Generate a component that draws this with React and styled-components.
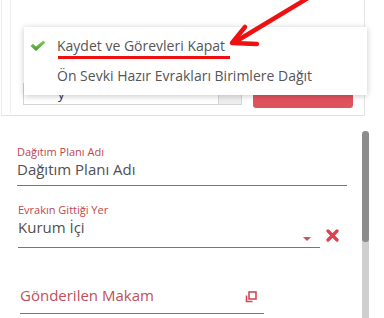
import React from "react";
import styled, { createGlobalStyle } from "styled-components";

const Global = createGlobalStyle`
  html, body { margin: 0; padding: 0; background: #fff; }
  body { font-family: "Open Sans", "Liberation Sans", sans-serif; overflow: hidden; }
  * { box-sizing: border-box; }
`;

const Page = styled.div`
  position: relative;
  width: 384px;
  height: 318px;
  overflow: hidden;
  background: #fff;
`;

const TopPanel = styled.div`
  margin-left: 1px;
  width: 364px;
  height: 116px;
  border-left: 1px solid #ececec;
  border-right: 1px solid #e6e6e6;
  border-bottom: 1px solid #e2e2e2;
`;

const TopInner = styled.div`
  margin-left: 8px;
  height: 113px;
  border-left: 1px solid #ececec;
  padding: 83px 0 0 12px;
`;

const InputGroup = styled.div`
  display: flex;
  align-items: flex-start;
`;

const TextBox = styled.div`
  width: 195px;
  height: 22px;
  border: 1px solid #d4d4d4;
  border-right: none;
  font-size: 13px;
  color: #333;
  padding: 0 0 0 34px;
  line-height: 20px;
`;

const Addon = styled.div`
  width: 24px;
  height: 22px;
  background: #eee;
  border: 1px solid #d4d4d4;
`;

const RedButton = styled.div`
  margin-left: 11px;
  width: 100px;
  height: 25px;
  background: #e0525e;
  border-radius: 3px;
`;

const Menu = styled.div`
  position: absolute;
  left: 24px;
  top: 27px;
  width: 343px;
  height: 68px;
  background: #fff;
  box-shadow: 0 1px 6px rgba(0, 0, 0, 0.22);
  padding-top: 5px;
`;

const MenuItem = styled.div`
  display: flex;
  align-items: center;
  height: ${(p) => p.$h}px;
  padding-left: 6px;
  font-size: 14px;
  color: #555;
  white-space: nowrap;
`;

const IconSlot = styled.span`
  width: 27px;
  display: flex;
  align-items: center;
`;

const Annotation = styled.svg`
  position: absolute;
  left: 0;
  top: 0;
  pointer-events: none;
`;

const FormArea = styled.div`
  display: flex;
  height: 202px;
`;

const FormContent = styled.div`
  width: 362px;
  padding: 29px 0 0 17px;
`;

const Field = styled.div`
  width: ${(p) => p.$w}px;
  margin-left: ${(p) => p.$ml || 0}px;
  margin-top: ${(p) => p.$mt || 0}px;
  border-bottom: 1px solid #c9535b;
  position: relative;
`;

const Label = styled.div`
  font-size: 11px;
  color: #c0464f;
  line-height: 14px;
`;

const Value = styled.div`
  font-size: 15px;
  color: #505050;
  line-height: 20px;
  padding-bottom: ${(p) => p.$pb || 0}px;
`;

const Placeholder = styled.div`
  font-size: 15px;
  color: #c0505a;
  line-height: 20px;
  padding-bottom: 8px;
`;

const FieldRow = styled.div`
  display: flex;
  align-items: flex-end;
`;

const Caret = styled.span`
  position: absolute;
  right: 9px;
  top: 34px;
  width: 0;
  height: 0;
  border-left: 4px solid transparent;
  border-right: 4px solid transparent;
  border-top: 4px solid #c9535b;
`;

const ClearIcon = styled.svg`
  margin: 0 0 6px 6px;
`;

const CopyIcon = styled.svg`
  position: absolute;
  right: 7px;
  top: 6px;
`;

const ScrollTrack = styled.div`
  margin-top: 15px;
  width: 7px;
  height: 187px;
  background: #cfcfcf;
  border-radius: 3px 3px 0 0;
  overflow: hidden;
`;

const ScrollThumb = styled.div`
  height: 111px;
  background: #8c8c8c;
  border-radius: 3px;
`;

export default function App() {
  return (
    <Page>
      <Global />
      <TopPanel>
        <TopInner>
          <InputGroup>
            <TextBox>y</TextBox>
            <Addon />
            <RedButton />
          </InputGroup>
        </TopInner>
      </TopPanel>

      <Menu>
        <MenuItem $h={27}>
          <IconSlot>
            <svg width="16" height="12" viewBox="0 0 16 12">
              <defs>
                <linearGradient id="g" x1="0" y1="0" x2="0" y2="1">
                  <stop offset="0" stopColor="#8fd060" />
                  <stop offset="1" stopColor="#3f9a2a" />
                </linearGradient>
              </defs>
              <path d="M0.5 6 L3 3.8 L6 6.5 L13.2 0.5 L15.5 2.6 L6 11 Z" fill="url(#g)" />
            </svg>
          </IconSlot>
          Kaydet ve Görevleri Kapat
        </MenuItem>
        <MenuItem $h={33}>
          <IconSlot />
          Ön Sevki Hazır Evrakları Birimlere Dağıt
        </MenuItem>
      </Menu>

      <Annotation width="384" height="120" viewBox="0 0 384 120">
        <rect x="58" y="56" width="172" height="3" fill="#ee1111" />
        <line x1="308" y1="-2" x2="235" y2="42" stroke="#ee1111" strokeWidth="4.5" strokeLinecap="round" />
        <polyline points="245,27 232,43 257,44" fill="none" stroke="#ee1111" strokeWidth="4.5" strokeLinecap="round" strokeLinejoin="round" />
      </Annotation>

      <FormArea>
        <FormContent>
          <Field $w={330}>
            <Label>Dağıtım Planı Adı</Label>
            <Value $pb={6}>Dağıtım Planı Adı</Value>
          </Field>
          <FieldRow>
            <Field $w={302} $ml={1} $mt={17}>
              <Label>Evrakın Gittiği Yer</Label>
              <Value $pb={10}>Kurum İçi</Value>
              <Caret />
            </Field>
            <ClearIcon width="13" height="13" viewBox="0 0 13 13">
              <path d="M2 2 L11 11 M11 2 L2 11" stroke="#e0404e" strokeWidth="3.2" strokeLinecap="round" />
            </ClearIcon>
          </FieldRow>
          <Field $w={244} $ml={3} $mt={37}>
            <Placeholder>Gönderilen Makam</Placeholder>
            <CopyIcon width="12" height="12" viewBox="0 0 12 12">
              <rect x="4" y="1" width="7" height="7" fill="none" stroke="#d04a55" strokeWidth="1.6" />
              <path d="M1.5 4.5 V10.5 H7.5" fill="none" stroke="#d04a55" strokeWidth="1.6" />
            </CopyIcon>
          </Field>
        </FormContent>
        <ScrollTrack>
          <ScrollThumb />
        </ScrollTrack>
      </FormArea>
    </Page>
  );
}
